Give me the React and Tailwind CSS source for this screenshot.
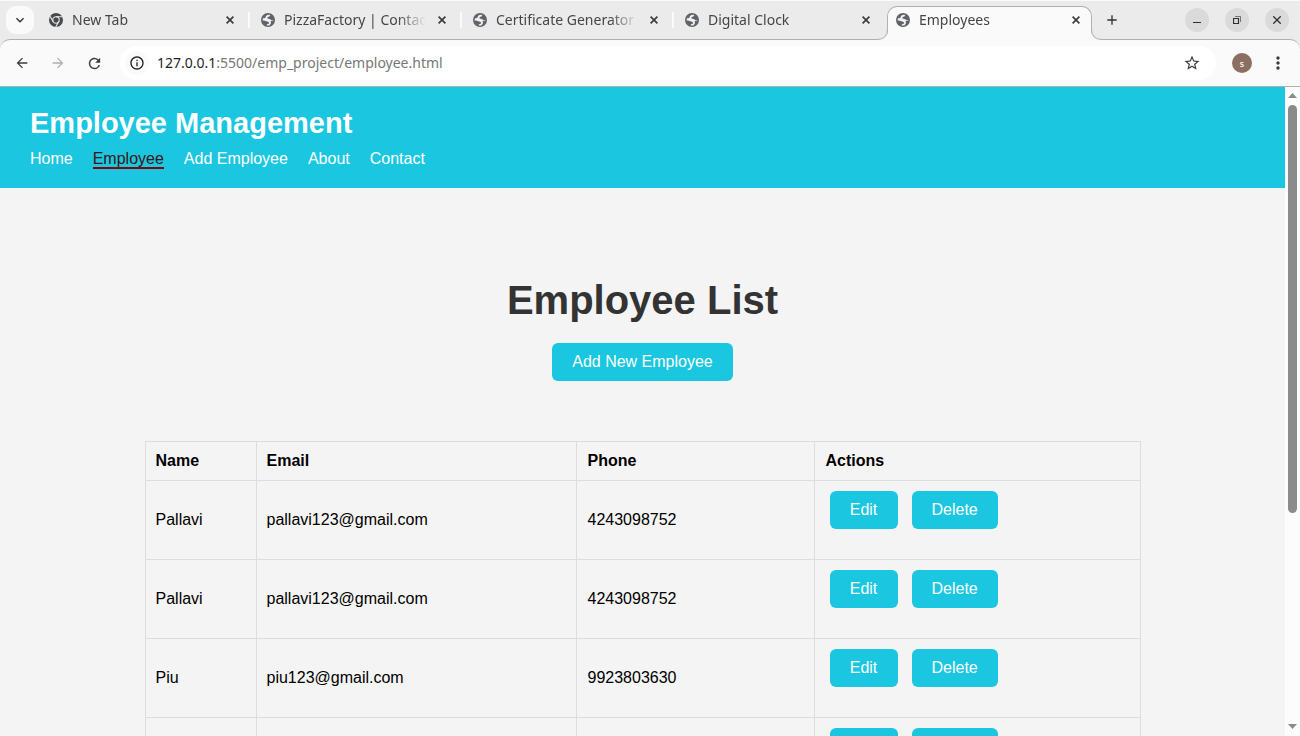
import React from "react";
import { MdArrowBack, MdArrowForward, MdRefresh, MdInfoOutline, MdStarOutline, MdMoreVert, MdAdd, MdKeyboardArrowDown } from "react-icons/md";

const tabs = [
  { title: "New Tab", chrome: true },
  { title: "PizzaFactory | Contact" },
  { title: "Certificate Generator" },
  { title: "Digital Clock" },
];

const links = ["Home", "Employee", "Add Employee", "About", "Contact"];

const employees = [
  { name: "Pallavi", email: "pallavi123@gmail.com", phone: "4243098752" },
  { name: "Pallavi", email: "pallavi123@gmail.com", phone: "4243098752" },
  { name: "Piu", email: "piu123@gmail.com", phone: "9923803630" },
  { name: "", email: "", phone: "" },
];

function Globe() {
  return (
    <svg viewBox="0 0 14 14" className="size-[14px] shrink-0" aria-hidden="true">
      <circle cx="7" cy="7" r="7" fill="#5f6368" />
      <path
        d="M8.400 1.700L9.300 2.600C9 3.500 8 3.700 6.900 3.900C6.300 4 6.400 5 6.700 5.500C7.500 6.200 9.200 5.700 9.900 6.700C10.400 7.500 11.500 7.300 12.400 7.300C12.300 9.800 10.600 11.900 8.200 12.400L6 12.500C5.300 12.300 5.500 11.400 6.200 11.200C7.300 11 8.200 10.500 8 9.500C7.700 8.500 6.400 8.800 5.300 8.300C4.400 7.800 3.200 7.700 1.500 7.500C1.700 6.400 2 5.600 2.600 4.700C3.800 3.200 5.500 1.600 8.400 1.700z"
        fill="#f0f0f0"
      />
      <path d="M2.200 4.500C3.300 6 4.500 5 4.800 3.600L6 1.500L3.500 2.400zM9.200 8.200C10.400 8.800 10.200 10.200 9.200 11.400L8.300 13L11.500 11.400L12.900 7.600z" fill="#5f6368" />
    </svg>
  );
}

function ChromeMark() {
  return (
    <svg viewBox="0 0 14 14" className="size-[14px] shrink-0" aria-hidden="true">
      <circle cx="7" cy="7" r="7" fill="#47494c" />
      <g stroke="#ebebeb" strokeWidth="1.100" fill="none">
        <circle cx="7" cy="7" r="3.200" />
        <path d="M7 3.800h6.500M4.200 8.600L1 3.200M9.800 8.600L6.700 14" />
      </g>
    </svg>
  );
}

function TabBody({ title, chrome }) {
  return (
    <>
      {chrome ? <ChromeMark /> : <Globe />}
      <span className="ml-[9px] mr-[9px] min-w-0 flex-1 overflow-hidden whitespace-nowrap pb-[2px] [mask-image:linear-gradient(to_right,black_calc(100%-28px),transparent)]">
        {title}
      </span>
      <button aria-label={"Close " + title} className="flex size-[14px] shrink-0 items-center justify-center text-[#3c3c3c]">
        <svg viewBox="0 0 8 8" className="size-2">
          <path d="M.6 .6l6.800 6.800M7.400 .6L.6 7.400" stroke="currentColor" strokeWidth="1.700" />
        </svg>
      </button>
    </>
  );
}

function TabStrip() {
  return (
    <div className="flex h-[39px] items-end border-t border-[#fafafa] text-[14px] text-[#464646]">
      <button aria-label="Search tabs" className="mb-[5px] ml-[6px] mr-[4px] flex size-[28px] shrink-0 items-center justify-center rounded-[10px] bg-[#fafafa] text-[#303030]">
        <MdKeyboardArrowDown className="size-[16px]" />
      </button>
      {tabs.map((t, i) => (
        <div key={t.title} className="flex h-[38px] w-[212px] min-w-0 items-center pl-[11px]">
          <TabBody {...t} />
          <span className={i < 3 ? "ml-[11px] h-4 w-[2px] bg-[#fafafa]" : "ml-[11px] h-4 w-[2px]"} />
        </div>
      ))}
      <div className="relative z-10 -mb-px ml-px flex h-[34px] w-[205px] min-w-0 items-center rounded-t-[10px] border border-b-0 border-[#b0b0b0] bg-[#fafafa] px-2 pb-[7px]">
        <svg viewBox="0 0 11 11" className="absolute -left-[11px] bottom-0 size-[11px]" aria-hidden="true">
          <path d="M11 0Q11 10.500 0 10.500V11H11z" fill="#fafafa" />
          <path d="M10.500 0Q10.500 10.500 0 10.500" fill="none" stroke="#b0b0b0" />
        </svg>
        <TabBody title="Employees" />
        <svg viewBox="0 0 11 11" className="absolute -right-[11px] bottom-0 size-[11px]" aria-hidden="true">
          <path d="M0 0Q0 10.500 11 10.500V11H0z" fill="#fafafa" />
          <path d="M.5 0Q.5 10.500 11 10.500" fill="none" stroke="#b0b0b0" />
        </svg>
      </div>
      <button aria-label="New tab" className="ml-3 flex h-[38px] w-4 shrink-0 items-center justify-center text-[#303030]">
        <MdAdd className="size-4 shrink-0" />
      </button>
      <div className="ml-auto mr-[11px] flex h-[38px] shrink-0 items-center gap-4 text-[#303030]">
        <button aria-label="Minimize" className="flex size-6 items-center justify-center rounded-full bg-[#dadada]">
          <svg viewBox="0 0 8 8" className="size-2"><path d="M0 6.500h8" stroke="currentColor" /></svg>
        </button>
        <button aria-label="Restore" className="flex size-6 items-center justify-center rounded-full bg-[#dadada]">
          <svg viewBox="0 0 8 8" className="size-2" fill="none" stroke="currentColor">
            <path d="M.5 2.500h5v5h-5z" strokeWidth="1.200" />
            <path d="M2 .5h5.500V6" opacity=".6" />
          </svg>
        </button>
        <button aria-label="Close window" className="flex size-6 items-center justify-center rounded-full bg-[#dadada]">
          <svg viewBox="0 0 8 8" className="size-2"><path d="M.3 .3l7.400 7.400M7.700 .3L.3 7.700" stroke="currentColor" strokeWidth="1.300" /></svg>
        </button>
      </div>
    </div>
  );
}

function Toolbar() {
  return (
    <div className="flex h-12 items-center rounded-t-[10px] border-y border-[#b0b0b0] bg-[#fafafa] px-[14px] text-[#3c3c3c]">
      <button aria-label="Back"><MdArrowBack className="size-4" /></button>
      <button aria-label="Forward" className="ml-5 text-[#b0b0b0]"><MdArrowForward className="size-4" /></button>
      <button aria-label="Reload" className="ml-5"><MdRefresh className="size-[17px]" /></button>
      <div className="ml-[17px] flex h-[34px] min-w-0 flex-1 items-center rounded-full bg-white pl-[5px] pr-[15px]">
        <button aria-label="Site information" className="flex size-6 shrink-0 items-center justify-center rounded-full bg-[#fafafa] text-[#202020]">
          <MdInfoOutline className="size-4" />
        </button>
        <a href="#url" className="ml-2 min-w-0 flex-1 truncate pb-[2px] text-[14px] text-[#777777]">
          <span className="text-[#1f1f1f]">127.0.0.1</span>:5500/emp_project/employee.html
        </a>
        <button aria-label="Bookmark this page"><MdStarOutline className="size-[18px]" /></button>
      </div>
      <button aria-label="Profile" className="ml-4 flex size-5 shrink-0 items-center justify-center rounded-full bg-[#8d6e63] text-[9px] font-medium leading-none text-white">s</button>
      <button aria-label="Menu" className="-mr-[2px] ml-4"><MdMoreVert className="size-5" /></button>
    </div>
  );
}

const buttonClass = "h-[38px] rounded-md bg-[#1ac6e0] px-5 text-white";

export default function App() {
  return (
    <div className="flex h-screen flex-col bg-[#ebebeb] font-['Noto_Sans',sans-serif]">
      <TabStrip />
      <Toolbar />
      <div className="flex min-h-0 flex-1 font-['Liberation_Sans',Arial,sans-serif] text-[16px] leading-[18px]">
        <div className="min-w-0 flex-1 overflow-y-auto bg-[#f4f4f4] [scrollbar-width:none]">
          <header className="bg-[#1ac6e0] px-[30px] pb-[19px] pt-5 text-white">
            <div className="text-[29px] font-bold leading-[32px]">Employee Management</div>
            <nav className="mt-[11px] flex gap-5 leading-[17px]">
              {links.map((l) => (
                <a
                  key={l}
                  href={"#" + l.replace(" ", "-").toLowerCase()}
                  className={l === "Employee" ? "border-b-2 border-[#8b0000] text-[#3c1414]" : "border-b-2 border-transparent"}
                >
                  {l}
                </a>
              ))}
            </nav>
          </header>
          <main className="px-5 pb-10 pt-[90px]">
            <div className="flex flex-col items-center">
              <h1 className="text-[40px] font-bold leading-[45px] text-[#333333]">Employee List</h1>
              <button className={buttonClass + " mt-5"}>Add New Employee</button>
            </div>
            <table className="mx-auto mt-[60px] w-full max-w-[996px] table-fixed border-collapse text-left text-black">
              <colgroup>
                <col className="w-[111px]" />
                <col className="w-[320px]" />
                <col className="w-[238px]" />
                <col />
              </colgroup>
              <thead>
                <tr>
                  <th className="h-[39px] border border-[#dddddd] px-[10px]">Name</th>
                  <th className="border border-[#dddddd] px-[10px]">Email</th>
                  <th className="border border-[#dddddd] px-[11px]">Phone</th>
                  <th className="border border-[#dddddd] px-[11px]">Actions</th>
                </tr>
              </thead>
              <tbody>
                {employees.map((e, i) => (
                  <tr key={i}>
                    <td className="h-[79px] border border-[#dddddd] px-[10px]">{e.name}</td>
                    <td className="border border-[#dddddd] px-[10px]">{e.email}</td>
                    <td className="border border-[#dddddd] px-[11px]">{e.phone}</td>
                    <td className="border border-[#dddddd] px-[15px] pt-[10px] align-top">
                      <div className="flex gap-[14px]">
                        <button className={buttonClass + " w-[68px]"}>Edit</button>
                        <button className={buttonClass + " w-[86px]"}>Delete</button>
                      </div>
                    </td>
                  </tr>
                ))}
              </tbody>
            </table>
          </main>
        </div>
        <div className="flex w-[15px] shrink-0 flex-col items-center bg-[#fcfcfc] pb-[7px] pt-[6px]" aria-hidden="true">
          <svg viewBox="0 0 9 5" className="h-[5px] w-[9px]"><path d="M0 5L4.500 0L9 5z" fill="#8b8b8b" /></svg>
          <div className="mt-[7px] h-[408px] w-[9px] rounded-full bg-[#8b8b8b]" />
          <svg viewBox="0 0 9 5" className="mt-auto h-[5px] w-[9px]"><path d="M0 0L4.500 5L9 0z" fill="#8b8b8b" /></svg>
        </div>
      </div>
    </div>
  );
}
